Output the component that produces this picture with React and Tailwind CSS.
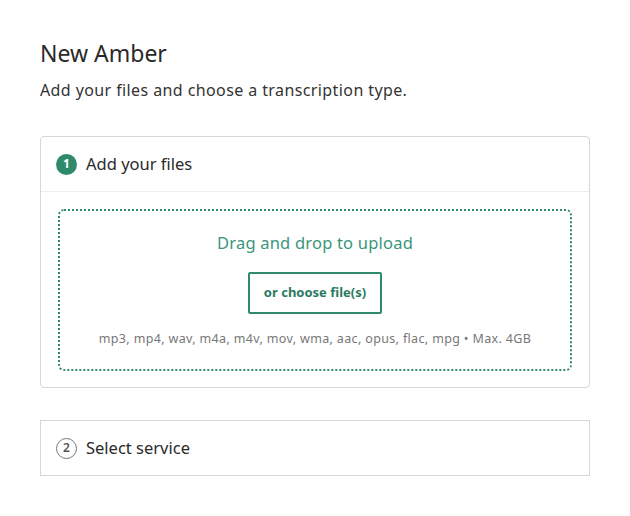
import React from "react";

const FORMATS = "mp3, mp4, wav, m4a, m4v, mov, wma, aac, opus, flac, mpg";

// STEP BADGE
const StepBadge = ({ n, active }) =>
  active ? (
    <span className="w-[21px] h-[21px] rounded-full bg-[#2f8a6d] text-white text-[12px] font-bold flex items-center justify-center">
      {n}
    </span>
  ) : (
    <span className="w-[21px] h-[21px] rounded-full border border-[#777] text-[#555] text-[12px] font-semibold flex items-center justify-center">
      {n}
    </span>
  );

// UPLOAD DROPZONE
const DropZone = () => (
  <div className="border-2 border-dotted border-[#2f8a6d] rounded-[6px] h-[162px] flex flex-col items-center pt-[20px]">
    <p className="text-[16.5px] tracking-[0.2px] text-[#3a957a] leading-[24px]">Drag and drop to upload</p>
    <button className="mt-[17px] w-[134px] h-[42px] border-2 border-[#2f8a6d] rounded-[2px] text-[13px] font-bold text-[#2b7a62]">
      or choose file(s)
    </button>
    <p className="mt-[16px] text-[12.5px] tracking-[0.35px] text-[#777] leading-[18px]">
      {FORMATS} • Max. 4GB
    </p>
  </div>
);

export default function App() {
  return (
    <div
      className="min-h-screen bg-white px-[40px] pt-[38px]"
      style={{ fontFamily: '"Noto Sans", sans-serif' }}
    >
      <h1 className="text-[23px] leading-[30px] text-[#2a2a2a]">New Amber</h1>
      <p className="mt-[10px] text-[16px] tracking-[0.4px] leading-[24px] text-[#333]">
        Add your files and choose a transcription type.
      </p>

      <div className="mt-[34px] w-[550px] border border-[#d6d6d6] rounded-[4px]">
        <div className="h-[55px] flex items-center gap-[9px] px-[15px] border-b border-[#ececec]">
          <StepBadge n={1} active />
          <span className="text-[16.5px] text-[#2a2a2a]">Add your files</span>
        </div>
        <div className="px-[17px] pt-[17px] pb-[16px]">
          <DropZone />
        </div>
      </div>

      <div className="mt-[32px] w-[550px] h-[56px] border border-[#d6d6d6] flex items-center gap-[9px] px-[15px]">
        <StepBadge n={2} />
        <span className="text-[16.5px] text-[#2a2a2a]">Select service</span>
      </div>
    </div>
  );
}
